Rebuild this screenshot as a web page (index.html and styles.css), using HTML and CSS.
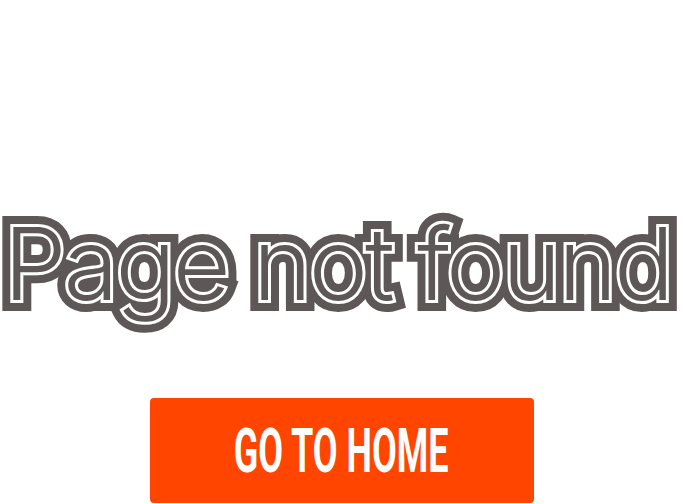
FILE: index.html
```html
<!DOCTYPE html>
<html lang="en">
<head>
<meta charset="utf-8">
<title>Page not found</title>
<link rel="stylesheet" href="styles.css">
</head>
<body>
<main class="notfound">
  <h1 class="title" data-text="Page not found"><span class="title-front">Page not found</span></h1>
  <a class="home-btn" href="#"><span class="home-label">GO TO HOME</span></a>
</main>
</body>
</html>
```
FILE: styles.css
```css
html, body {
  margin: 0;
  padding: 0;
  background: #ffffff;
}

body {
  width: 683px;
  height: 504px;
  overflow: hidden;
}

.notfound {
  display: flex;
  flex-direction: column;
  align-items: center;
  padding-top: 214px;
}

.title {
  display: grid;
  margin: 0 8px 0 0;
  font-family: Inter, "Noto Sans", sans-serif;
  font-weight: 300;
  font-size: 100px;
  line-height: 1;
  letter-spacing: -3px;
  white-space: nowrap;
  color: #5d5857;
}

.title::before {
  content: attr(data-text);
  grid-area: 1 / 1;
  -webkit-text-stroke: 22px #5d5857;
}

.title-front {
  grid-area: 1 / 1;
  -webkit-text-stroke: 6px #ffffff;
  paint-order: stroke fill;
}

.home-btn {
  display: flex;
  align-items: center;
  justify-content: center;
  width: 384px;
  height: 105px;
  margin-top: 84px;
  background: #ff4500;
  border-radius: 4px;
  text-decoration: none;
  color: #ffffff;
}

.home-label {
  display: inline-block;
  font-family: Roboto, "Liberation Sans", sans-serif;
  font-weight: 700;
  font-size: 62px;
  line-height: 1;
  transform: scaleX(0.58);
  white-space: nowrap;
}
```
